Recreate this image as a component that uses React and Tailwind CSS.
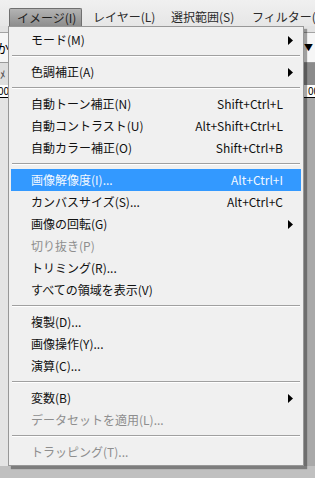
// Photoshop-style "イメージ" dropdown menu (Japanese UI)

const SEP = { sep: true }

const items = [
  { label: 'モード(M)', sub: true },
  SEP,
  { label: '色調補正(A)', sub: true },
  SEP,
  { label: '自動トーン補正(N)', keys: 'Shift+Ctrl+L' },
  { label: '自動コントラスト(U)', keys: 'Alt+Shift+Ctrl+L' },
  { label: '自動カラー補正(O)', keys: 'Shift+Ctrl+B' },
  SEP,
  { label: '画像解像度(I)...', keys: 'Alt+Ctrl+I', active: true },
  { label: 'カンバスサイズ(S)...', keys: 'Alt+Ctrl+C' },
  { label: '画像の回転(G)', sub: true },
  { label: '切り抜き(P)', disabled: true },
  { label: 'トリミング(R)...' },
  { label: 'すべての領域を表示(V)' },
  SEP,
  { label: '複製(D)...' },
  { label: '画像操作(Y)...' },
  { label: '演算(C)...' },
  SEP,
  { label: '変数(B)', sub: true },
  { label: 'データセットを適用(L)...', disabled: true },
  SEP,
  { label: 'トラッピング(T)...', disabled: true },
]

function Arrow() {
  return (
    <svg width="5" height="9" viewBox="0 0 5 9" className="block">
      <path d="M0 0 L5 4.5 L0 9 Z" fill="#000" />
    </svg>
  )
}

function MenuRow({ item }) {
  let color = 'text-[#111]'
  if (item.disabled) color = 'text-[#8e8e8e]'
  if (item.active) color = 'text-[#f2f8ff]'
  return (
    <div className={`flex h-[22px] items-center ${item.active ? 'bg-[#3399ff]' : ''} ${color}`}>
      <span className="flex-1 whitespace-nowrap pl-[20px] leading-[22px]">{item.label}</span>
      {item.keys && <span className="whitespace-nowrap leading-[22px]">{item.keys}</span>}
      <span className="flex w-[18px] items-center pl-[5px]">{item.sub && <Arrow />}</span>
    </div>
  )
}

function Separator() {
  return (
    <div className="flex h-[10px] flex-col justify-center px-[1px]">
      <div className="h-[1px] bg-[#a0a0a0]" />
      <div className="h-[1px] bg-white" />
    </div>
  )
}

export default function App() {
  return (
    <div className="relative h-[478px] w-[315px] overflow-hidden bg-[#c0c0c0] font-['Segoe_UI','Noto_Sans_CJK_JP',sans-serif] text-[12px]">
      {/* menu bar */}
      <div className="flex h-[26px] items-end overflow-hidden bg-gradient-to-b from-[#f0f0f0] to-[#e6e6e6] pl-[9px] text-[#2a2a2a]">
        <div className="flex h-[18px] w-[73px] shrink-0 items-center rounded-t-[2px] border border-b-0 border-[#6f6f6f] bg-gradient-to-b from-[#b4b4b4] to-[#8d8d8d] pl-[7px] text-[#1c1c1c]">
          イメージ(I)
        </div>
        <div className="flex h-[18px] w-[89px] shrink-0 items-center pl-[11px]">レイヤー(L)</div>
        <div className="flex h-[18px] w-[81px] shrink-0 items-center">選択範囲(S)</div>
        <div className="flex h-[18px] shrink-0 items-center whitespace-nowrap">フィルター(T)</div>
      </div>

      {/* document area behind the menu */}
      <div className="h-[7px] border-b border-[#a3a3a3] bg-[#e2e2e2]" />
      <div className="flex h-[30px] items-center justify-between border-b border-[#9a9a9a] bg-[#f6f6f6] text-[13px] text-black">
        <span className="ml-[-4px]">か</span>
        <span className="mr-[2px] text-[9px]">▼</span>
      </div>
      <div className="flex h-[22px] justify-between">
        <div className="w-[10px] bg-[#dedede] text-[11px] leading-[22px] text-[#444]">ﾒ</div>
        <div className="flex-1 bg-[#8b8b8b]" />
      </div>
      <div className="flex h-[13px] items-center justify-between border-b border-black bg-white text-[10px] leading-none text-black">
        <span className="ml-[-2px]">00</span>
        <span className="mr-[-4px]">00</span>
      </div>
      <div className="flex h-[368px]">
        <div className="w-[10px] bg-[#e4e4e4]" />
        <div className="flex-1 bg-[#a9a9a9]" />
      </div>

      {/* dropdown */}
      <div className="absolute left-[8px] top-[26px] w-[296px] border border-[#979797] bg-[#f0f0f0] p-[2px] shadow-[3px_3px_1px_rgba(0,0,0,0.35)]">
        {items.map((item, i) =>
          item.sep ? <Separator key={i} /> : <MenuRow key={i} item={item} />
        )}
      </div>
    </div>
  )
}
